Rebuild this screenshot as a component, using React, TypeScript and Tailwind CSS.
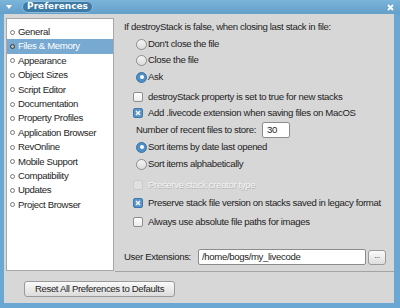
import React from 'react';

const CATEGORIES = [
  'General',
  'Files & Memory',
  'Appearance',
  'Object Sizes',
  'Script Editor',
  'Documentation',
  'Property Profiles',
  'Application Browser',
  'RevOnline',
  'Mobile Support',
  'Compatibility',
  'Updates',
  'Project Browser',
];

const Radio: React.FC<{ on?: boolean }> = ({ on }) =>
  on ? (
    <span className="w-[11px] h-[11px] rounded-full bg-[#4d8fc6] border border-[#3a74a6] flex items-center justify-center shrink-0">
      <span className="w-[4px] h-[4px] rounded-full bg-white" />
    </span>
  ) : (
    <span className="w-[11px] h-[11px] rounded-full bg-gradient-to-b from-[#f4f4f4] to-[#dcdcdc] border border-[#8e8e8e] shrink-0" />
  );

const Check: React.FC<{ on?: boolean; disabled?: boolean }> = ({ on, disabled }) => {
  if (on) {
    return (
      <span className="w-[10px] h-[10px] rounded-[2px] bg-[#5a95c8] border border-[#3f77a8] flex items-center justify-center shrink-0">
        <svg width="6" height="6" viewBox="0 0 6 6">
          <path d="M1 1 L5 5 M5 1 L1 5" stroke="#fff" strokeWidth="1.4" />
        </svg>
      </span>
    );
  }
  return (
    <span
      className={`w-[10px] h-[10px] rounded-[2px] shrink-0 border ${
        disabled ? 'bg-[#e0e0e0] border-[#cacaca]' : 'bg-gradient-to-b from-white to-[#ececec] border-[#8e8e8e]'
      }`}
    />
  );
};

export default function App() {
  return (
    <div
      className="w-[400px] h-[308px] bg-[#6aa7d2] flex flex-col text-[9.6px] text-[#1e1e1e] tracking-[-0.35px] whitespace-nowrap overflow-hidden"
      style={{ fontFamily: '"Liberation Sans", Arial, sans-serif' }}
    >
      {/* title bar */}
      <div className="h-[14px] flex items-center shrink-0 bg-gradient-to-b from-[#7cb4da] to-[#629fca]">
        <svg className="ml-[6px]" width="6" height="4" viewBox="0 0 6 4">
          <path d="M0 0 H6 L3 4 Z" fill="#fff" />
        </svg>
        <div
          className="ml-[10px] h-[12px] w-[71px] rounded-full bg-[#3d7aa5] border border-[#8cbbdc] flex items-center justify-center text-white font-bold text-[9px] tracking-normal"
          style={{ fontFamily: '"DejaVu Sans", sans-serif' }}
        >
          Preferences
        </div>
        <svg className="ml-auto mr-[6px]" width="7" height="7" viewBox="0 0 7 7">
          <path d="M1 1 L6 6 M6 1 L1 6" stroke="#fff" strokeWidth="1.8" />
        </svg>
      </div>

      {/* body */}
      <div className="flex-1 ml-[4px] mr-[6px] mb-[5px] bg-[#d7d7d7] flex flex-col">
        <div className="flex">
          {/* category list */}
          <div className="ml-[2px] mt-[4px] w-[108px] h-[253px] bg-white border border-[#a8a8a8] pt-[6px]">
            {CATEGORIES.map((c, i) => (
              <div
                key={c}
                className={`h-[14.4px] flex items-center ${i === 1 ? 'bg-[#78a9d1] text-white' : ''}`}
              >
                <span
                  className={`ml-[3px] w-[5px] h-[5px] rounded-full border ${
                    i === 1 ? 'border-[#3a3a3a] bg-[#bbbbbb]' : 'border-[#777] bg-white'
                  }`}
                />
                <span className="ml-[3px]">{c}</span>
              </div>
            ))}
          </div>

          {/* settings panel */}
          <div className="flex-1 ml-[1px] pl-[9px] pt-[6px] pb-[6px] border-b border-[#a4a4a4] flex flex-col">
            <div className="h-[14px] flex items-center">If destroyStack is false, when closing last stack in file:</div>
            <div className="mt-[3px] h-[14px] flex items-center pl-[12px] gap-[1px]">
              <Radio />
              <span>Don't close the file</span>
            </div>
            <div className="mt-[2px] h-[14px] flex items-center pl-[12px] gap-[1px]">
              <Radio />
              <span>Close the file</span>
            </div>
            <div className="mt-[3px] h-[14px] flex items-center pl-[12px] gap-[1px]">
              <Radio on />
              <span>Ask</span>
            </div>
            <div className="mt-[6px] h-[14px] flex items-center pl-[9px] gap-[5px]">
              <Check />
              <span>destroyStack property is set to true for new stacks</span>
            </div>
            <div className="mt-[2px] h-[14px] flex items-center pl-[9px] gap-[5px]">
              <Check on />
              <span>Add .livecode extension when saving files on MacOS</span>
            </div>
            <div className="mt-[2px] h-[16px] flex items-center pl-[12px]">
              <span>Number of recent files to store:</span>
              <span className="ml-[6px] w-[28px] h-[16px] bg-white border border-[#8c8c8c] rounded-[2px] flex items-center pl-[4px]">
                30
              </span>
            </div>
            <div className="mt-[2px] h-[14px] flex items-center pl-[12px] gap-[1px]">
              <Radio on />
              <span>Sort items by date last opened</span>
            </div>
            <div className="mt-[3px] h-[14px] flex items-center pl-[12px] gap-[1px]">
              <Radio />
              <span>Sort items alphabetically</span>
            </div>
            <div className="mt-[7px] h-[14px] flex items-center pl-[9px] gap-[5px]">
              <Check disabled />
              <span className="text-[#f3f3f3]" style={{ textShadow: '0.5px 0.5px 0 #b4b4b4' }}>
                Preserve stack creator type
              </span>
            </div>
            <div className="mt-[4px] h-[14px] flex items-center pl-[9px] gap-[5px]">
              <Check on />
              <span>Preserve stack file version on stacks saved in legacy format</span>
            </div>
            <div className="mt-[5px] h-[14px] flex items-center pl-[9px] gap-[5px]">
              <Check />
              <span>Always use absolute file paths for images</span>
            </div>
            <div className="mt-[20px] h-[16px] flex items-center">
              <span className="w-[74px]">User Extensions:</span>
              <span className="w-[168px] h-[16px] bg-white border border-[#8c8c8c] rounded-[2px] flex items-center pl-[3px]">
                /home/bogs/my_livecode
              </span>
              <span className="ml-[2px] w-[18px] h-[15px] rounded-[3px] border border-[#9a9a9a] bg-gradient-to-b from-[#fbfbfb] to-[#dedede] flex items-center justify-center text-[8px] leading-none pb-[3px]">
                ...
              </span>
            </div>
          </div>
        </div>

        {/* footer */}
        <div className="flex-1 flex items-start pt-[9px] pl-[20px]">
          <button className="w-[151px] h-[16px] rounded-[3px] border border-[#9a9a9a] bg-gradient-to-b from-[#fafafa] to-[#dcdcdc] flex items-center justify-center text-[9.6px] text-[#1e1e1e]">
            Reset All Preferences to Defaults
          </button>
        </div>
      </div>
    </div>
  );
}
